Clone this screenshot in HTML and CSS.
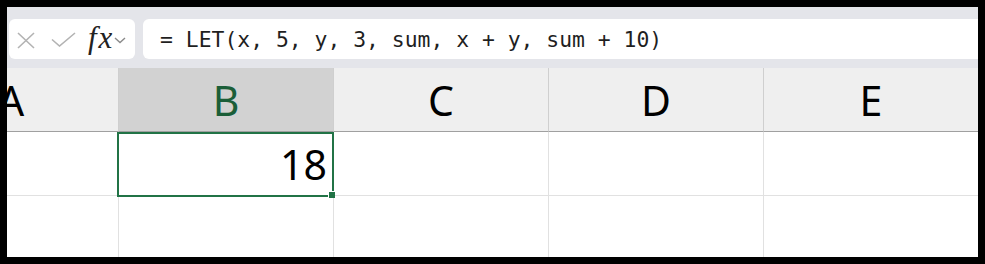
FILE: index.html
```html
<!DOCTYPE html>
<html>
<head>
<meta charset="utf-8">
<link rel="stylesheet" href="styles.css">
</head>
<body>
<div class="frame">
  <div class="toolbar">
    <div class="namebox">
      <svg class="ic-x" width="18" height="17" viewBox="0 0 18 17"><path d="M1 1 L17 16 M17 1 L1 16" stroke="#b3b3b3" stroke-width="1.6" fill="none"/></svg>
      <svg class="ic-check" width="25" height="15" viewBox="0 0 25 15"><path d="M1 7.5 L8.5 14 L24 1" stroke="#b3b3b3" stroke-width="1.6" fill="none"/></svg>
      <span class="fx">fx</span>
      <svg class="ic-chev" width="12" height="7" viewBox="0 0 12 7"><path d="M1 1 L6 5.5 L11 1" stroke="#8a8a8a" stroke-width="1.4" fill="none"/></svg>
    </div>
    <div class="formula">= LET(x, 5, y, 3, sum, x + y, sum + 10)</div>
  </div>
  <div class="sheet">
    <div class="grid">
      <div class="hcell">A</div>
      <div class="hcell hsel">B</div>
      <div class="hcell">C</div>
      <div class="hcell">D</div>
      <div class="hcell">E</div>
      <div class="cell"></div>
      <div class="cell num">18</div>
      <div class="cell"></div>
      <div class="cell"></div>
      <div class="cell"></div>
      <div class="cell row2"></div>
      <div class="cell row2"></div>
      <div class="cell row2"></div>
      <div class="cell row2"></div>
      <div class="cell row2"></div>
    </div>
    <div class="selection"><div class="handle"></div></div>
  </div>
</div>
</body>
</html>
```

FILE: styles.css
```css
html, body {
  margin: 0;
  padding: 0;
  background: #000;
}
.frame {
  margin: 7px;
  width: 971px;
  height: 250px;
  overflow: hidden;
  background: #fff;
  display: flex;
  flex-direction: column;
}
.toolbar {
  height: 61px;
  box-sizing: border-box;
  background: #e4e5ea;
  display: flex;
  padding: 12px 0 9px 2px;
  gap: 8px;
  flex-shrink: 0;
}
.namebox {
  width: 126px;
  height: 40px;
  background: #fff;
  border-radius: 6px;
  display: flex;
  align-items: center;
  box-sizing: border-box;
  padding-left: 8px;
  flex-shrink: 0;
}
.ic-x { margin-top: 3px; }
.ic-check { margin-left: 16px; margin-top: 1px; }
.fx {
  margin-left: 12px;
  font-family: "Liberation Serif", serif;
  font-style: italic;
  font-size: 31px;
  letter-spacing: 2px;
  color: #222;
  line-height: 1;
  margin-top: -3px;
}
.ic-chev { margin-left: 0; margin-top: 2px; }
.formula {
  flex: 1;
  height: 40px;
  background: #fff;
  border-radius: 6px 0 0 6px;
  display: flex;
  align-items: center;
  padding-left: 17px;
  font-family: "DejaVu Sans Mono", monospace;
  font-size: 21.4px;
  color: #1f1f1f;
  white-space: pre;
}
.sheet {
  position: relative;
  flex: 1;
}
.grid {
  display: grid;
  grid-template-columns: repeat(5, 215px);
  grid-template-rows: 64px 64px 70px;
  margin-left: -103px;
}
.hcell {
  background: #efefef;
  border-right: 1px solid #cfcfcf;
  border-bottom: 1px solid #a0a0a0;
  display: flex;
  align-items: center;
  justify-content: center;
  font-family: "Noto Sans", sans-serif;
  font-size: 41px;
  color: #000;
  padding-top: 1px;
  box-sizing: border-box;
}
.hsel {
  background: #d2d2d2;
  color: #1b5e38;
}
.cell {
  border-right: 1px solid #e1e1e1;
  border-bottom: 1px solid #e1e1e1;
  box-sizing: border-box;
}
.num {
  display: flex;
  align-items: center;
  justify-content: flex-end;
  padding-right: 6px;
  font-family: "Noto Sans", sans-serif;
  font-size: 41px;
  color: #000;
}
.row2 { border-bottom: none; }
.selection {
  position: absolute;
  left: 110px;
  top: 64px;
  width: 217px;
  height: 65px;
  box-sizing: border-box;
  border: 2px solid #217346;
}
.handle {
  position: absolute;
  left: 209px;
  top: 57px;
  width: 6px;
  height: 6px;
  background: #217346;
  border-left: 1px solid #fff;
  border-top: 1px solid #fff;
}
```
